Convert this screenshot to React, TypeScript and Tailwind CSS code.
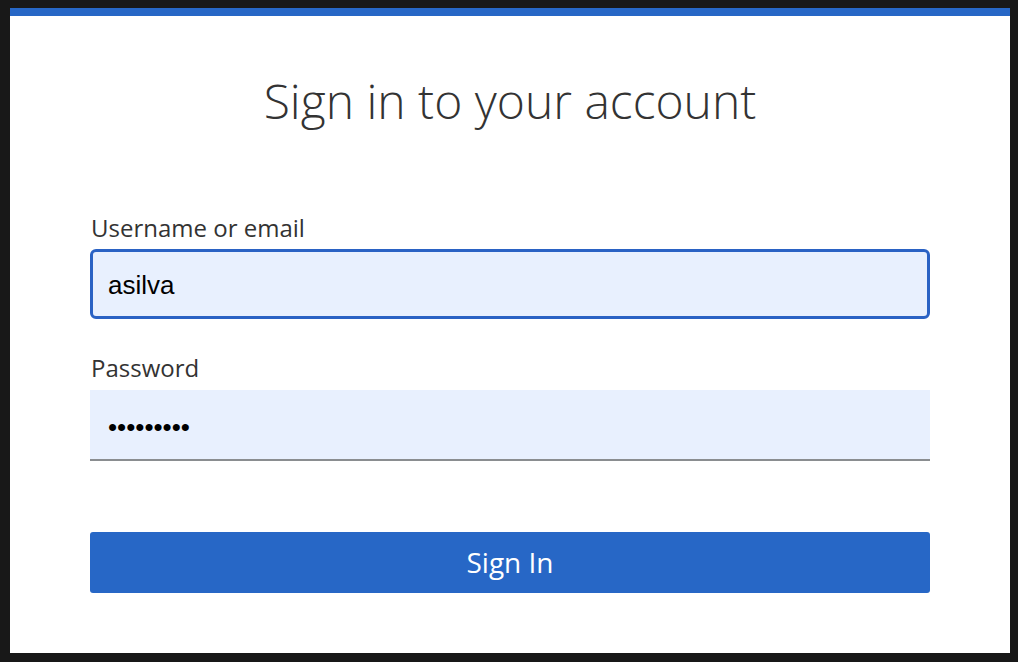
export default function App() {
  return (
    <div className="h-screen w-screen bg-[#181818] pt-2 pl-[10px] pr-2 pb-[9px]">
      <div className="h-full bg-white border-t-8 border-[#2767c6] px-20 pt-[57px] font-['Open_Sans',sans-serif]">
        {/* Title */}
        <h1 className="text-center text-[48px] leading-[56px] font-light text-[#333333]">
          Sign in to your account
        </h1>

        <form className="mt-[85px] flex flex-col" onSubmit={(e) => e.preventDefault()}>
          <label className="text-[24px] leading-[28px] text-[#333333] pl-px mb-[7px]">
            Username or email
          </label>
          <input
            type="text"
            readOnly
            value="asilva"
            className="h-[70px] w-full rounded-md border-[3px] border-[#2a62c4] bg-[#e8f0fe] px-[15px] pt-[2px] text-[26px] text-black font-['Liberation_Sans',Arial,sans-serif] outline-none"
          />

          <label className="mt-[35px] text-[24px] leading-[28px] text-[#333333] pl-px mb-[8px]">
            Password
          </label>
          <input
            type="password"
            readOnly
            value="123456789"
            className="h-[71px] w-full border-b-2 border-[#8a8d90] bg-[#e8f0fe] px-[18px] pt-[5px] text-[26px] text-black font-['Liberation_Sans',Arial,sans-serif] outline-none"
          />

          <button
            type="submit"
            className="mt-[71px] h-[61px] w-full rounded-[3px] bg-[#2767c6] pb-[2px] text-white text-[28px]"
          >
            Sign In
          </button>
        </form>
      </div>
    </div>
  );
}
